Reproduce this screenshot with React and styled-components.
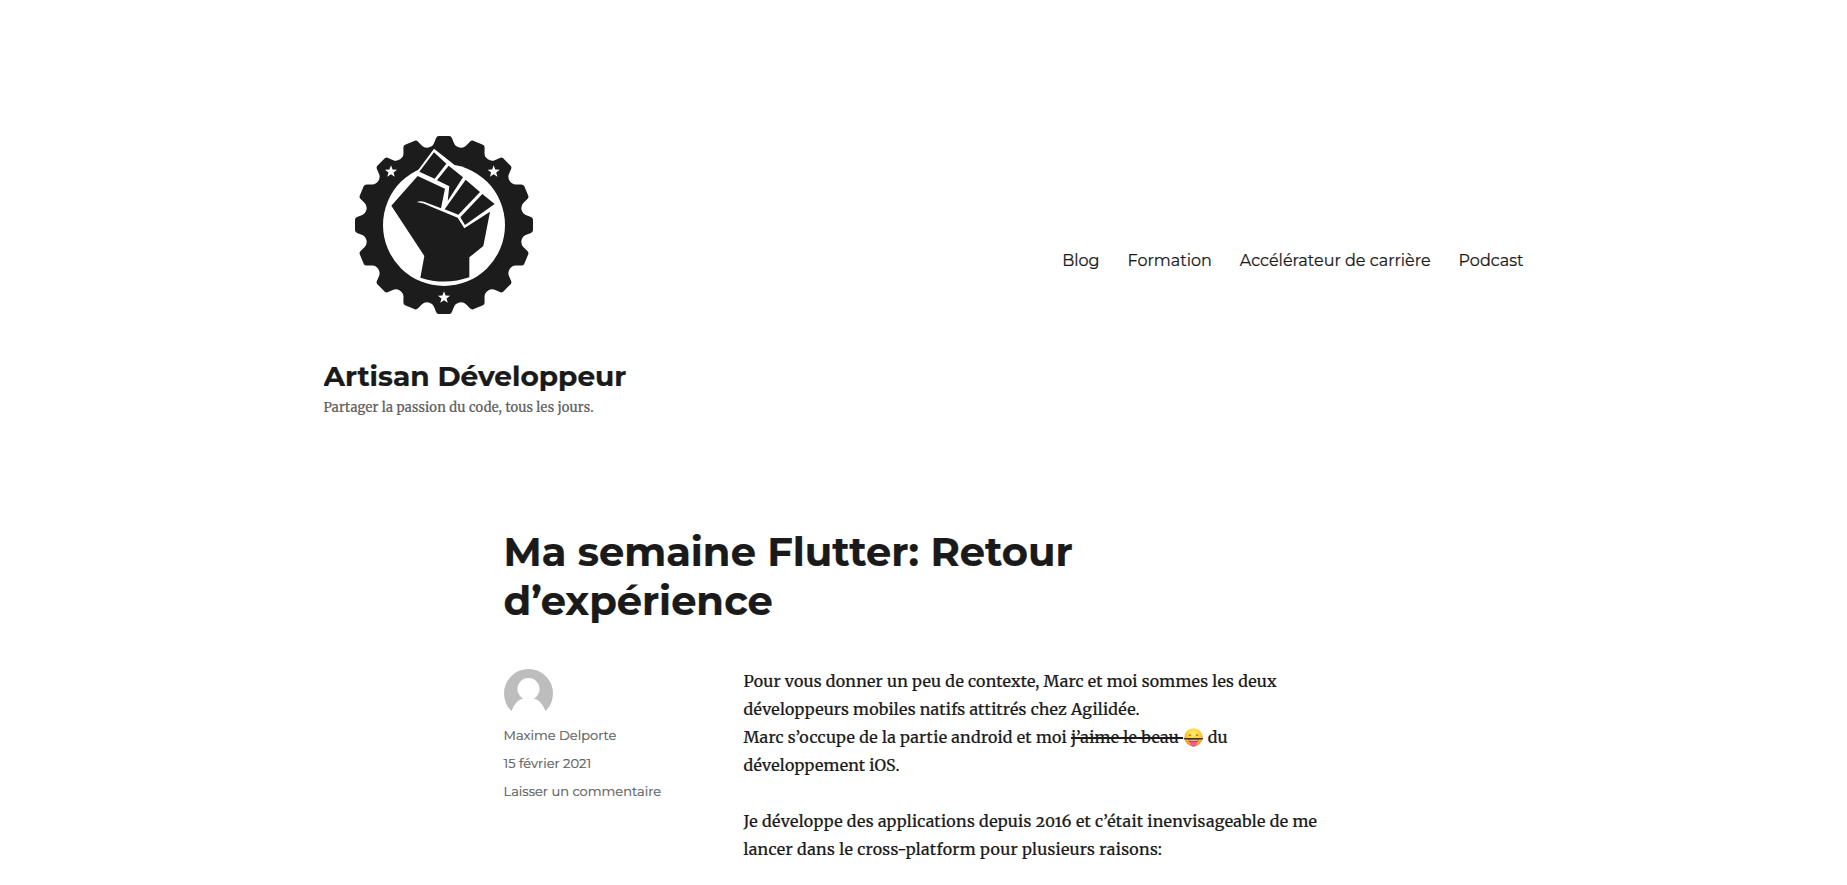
import React from "react";
import styled, { createGlobalStyle } from "styled-components";

const sans = `Montserrat, "Open Sans", "Liberation Sans", sans-serif`;
const serif = `Merriweather, "Noto Serif", "DejaVu Serif Condensed", serif`;
const ink = "#1a1a1a";
const muted = "#606060";

const GlobalStyle = createGlobalStyle`
  *, *::before, *::after { box-sizing: border-box; }
  html, body { margin: 0; background: #fff; overflow: hidden; }
  h1, h2, p { margin: 0; }
  a { color: inherit; text-decoration: none; }
  body {
    color: ${ink};
    font: 400 16px/28px ${serif};
    -webkit-text-stroke: 0.22px currentColor;
  }
`;

const Page = styled.div`
  width: 1200px;
  height: 885px;
  margin: 0 auto;
  overflow: hidden;
`;

const Header = styled.header`
  display: flex;
  align-items: center;
  justify-content: space-between;
  height: 522px;
`;

const Branding = styled.div`
  display: flex;
  flex-direction: column;
  align-items: flex-start;
`;

const LogoMark = styled.svg`
  display: block;
  width: 240px;
  height: 240px;
`;

const SiteTitle = styled.h1`
  margin-top: 14px;
  font: 700 28px/35px ${sans};
`;

const Tagline = styled.p`
  margin-top: 5px;
  color: ${muted};
  font-size: 13px;
  line-height: 18px;
  letter-spacing: 0.2px;
`;

const Nav = styled.nav`
  display: flex;
  gap: 28px;
  font: 400 16px/22px ${sans};
`;

const Article = styled.article`
  width: 840px;
  margin: 5px auto 0;
`;

const ArticleTitle = styled.h2`
  width: 600px;
  font: 700 40px/49px ${sans};
`;

const Columns = styled.div`
  display: flex;
  margin-top: 42px;
`;

const Meta = styled.aside`
  display: flex;
  flex-direction: column;
  width: 240px;
  padding-top: 2px;
  color: ${muted};
  font: 400 13px/28px ${sans};
`;

const Avatar = styled.svg`
  display: block;
  width: 49px;
  height: 49px;
  margin-bottom: 3px;
`;

const Content = styled.div`
  display: flex;
  flex-direction: column;
  gap: 28px;
  width: 600px;
  font-feature-settings: "onum" 1;
`;

const Line = styled.span`
  display: block;
  white-space: nowrap;
  letter-spacing: ${(p) => p.$track}px;
`;

const Struck = styled.s`
  text-decoration-thickness: 1.5px;
`;

const Emoji = styled.svg`
  display: inline-block;
  width: 19px;
  height: 19px;
  margin: 0 0.5px 0 1px;
  vertical-align: -4px;
`;

const polar = (deg, r) => {
  const a = (deg * Math.PI) / 180;
  return `${(300 + r * Math.sin(a)).toFixed(1)} ${(300 - r * Math.cos(a)).toFixed(1)}`;
};

const gearPath =
  Array.from({ length: 16 }, (_, i) => {
    const c = i * 22.5;
    return [
      `${i ? "L" : "M"}${polar(c - 5.2, 262)}`,
      `Q${polar(c - 4.6, 267.5)} ${polar(c - 3.4, 267.5)}`,
      `L${polar(c + 3.4, 267.5)}`,
      `Q${polar(c + 4.6, 267.5)} ${polar(c + 5.2, 262)}`,
      `L${polar(c + 7, 247)}`,
      `Q${polar(c + 8.2, 238)} ${polar(c + 11.25, 237)}`,
      `Q${polar(c + 14.3, 238)} ${polar(c + 15.5, 247)}`,
    ].join("");
  }).join("") + "Z";

const starPoints = (cx, cy, r) =>
  Array.from({ length: 10 }, (_, i) => {
    const a = (i * Math.PI) / 5;
    const d = i % 2 ? r * 0.42 : r;
    return `${(cx + d * Math.sin(a)).toFixed(1)},${(cy - d * Math.cos(a)).toFixed(1)}`;
  }).join(" ");

function Logo() {
  return (
    <LogoMark viewBox="-60 -60 720 720" role="img" aria-label="Artisan Développeur">
      <path d={gearPath} fill="#1c1c1c" />
      <circle cx="300" cy="300" r="183" fill="#fff" />
      <path fill="#fff" d="M270 71L327 116L367 153L411 192L459 237L440 258L362 310L330 280L225 200L216 144Z" />
      <g fill="#1c1c1c">
        <path d="M221 153L303 191L291 250L240 230Q228 227 218 231Q240 234 258 244L341 278L361 310L438 260L418 363L376 397V457Q304 482 229 458L241 393L142 242Z" />
        <path d="M270 82L307 116L272 161L226 140Z" />
        <path d="M314 122L357 157L311 228L316 184L279 166Z" />
        <path d="M365 164L408 201L343 269L302 253Z" />
        <path d="M415 207L452 237L363 300L349 277Z" />
      </g>
      <g fill="#fff">
        <polygon points={starPoints(141, 140, 19)} />
        <polygon points={starPoints(449, 140, 19)} />
        <polygon points={starPoints(300, 518, 19)} />
      </g>
    </LogoMark>
  );
}

function TongueFace() {
  return (
    <Emoji viewBox="0 0 19 19" role="img" aria-label="😛">
      <defs>
        <radialGradient id="face" cx="0.5" cy="0.3" r="0.7">
          <stop offset="0" stopColor="#fff06a" />
          <stop offset="0.6" stopColor="#fcc838" />
          <stop offset="1" stopColor="#ea8a24" />
        </radialGradient>
      </defs>
      <circle cx="9.5" cy="9.3" r="9.1" fill="url(#face)" />
      <path d="M3.8 10.5H15.2Q14.2 15.2 9.5 15.2T3.8 10.5Z" fill="#8a3a16" />
      <path d="M4.6 11.5H14.4L13.8 12.8H5.2Z" fill="#f6e3c0" />
      <path d="M6.5 13.4H12.5V15.8A3 3 0 0 1 6.5 15.8Z" fill="#f5569b" />
      <path d="M4.8 7.4Q6 6.2 7.2 7.4M11.8 7.4Q13 6.2 14.2 7.4" fill="none" stroke="#7a4312" strokeWidth="0.9" />
      <path d="M-1 10.8H19" stroke="#1a1a1a" strokeWidth="1.2" />
    </Emoji>
  );
}

export default function App() {
  return (
    <>
      <GlobalStyle />
      <Page>
        <Header>
          <Branding>
            <Logo />
            <SiteTitle>Artisan Développeur</SiteTitle>
            <Tagline>Partager la passion du code, tous les jours.</Tagline>
          </Branding>
          <Nav>
            <a href="#blog">Blog</a>
            <a href="#formation">Formation</a>
            <a href="#carriere">Accélérateur de carrière</a>
            <a href="#podcast">Podcast</a>
          </Nav>
        </Header>
        <Article>
          <ArticleTitle>Ma semaine Flutter: Retour d’expérience</ArticleTitle>
          <Columns>
            <Meta>
              <Avatar viewBox="0 0 49 49" aria-hidden="true">
                <circle cx="24.5" cy="24.5" r="24.5" fill="#bdbdbd" />
                <circle cx="24.5" cy="20" r="11" fill="#fff" />
                <path d="M7 43Q12 30 20 29.5H29Q37 30 42 43V49H7Z" fill="#fff" />
              </Avatar>
              <a href="#auteur">Maxime Delporte</a>
              <a href="#date">15 février 2021</a>
              <a href="#commentaire">Laisser un commentaire</a>
            </Meta>
            <Content>
              <p>
                <Line $track={0.22}>Pour vous donner un peu de contexte, Marc et moi sommes les deux</Line>
                <Line $track={0.21}>développeurs mobiles natifs attitrés chez Agilidée.</Line>
                <Line $track={0.26}>
                  Marc s’occupe de la partie android et moi <Struck>j’aime le beau <TongueFace /></Struck> du
                </Line>
                <Line $track={0.2}>développement iOS.</Line>
              </p>
              <p>
                <Line $track={0.28}>Je développe des applications depuis 2016 et c’était inenvisageable de me</Line>
                <Line $track={0.31}>lancer dans le cross-platform pour plusieurs raisons:</Line>
              </p>
            </Content>
          </Columns>
        </Article>
      </Page>
    </>
  );
}
